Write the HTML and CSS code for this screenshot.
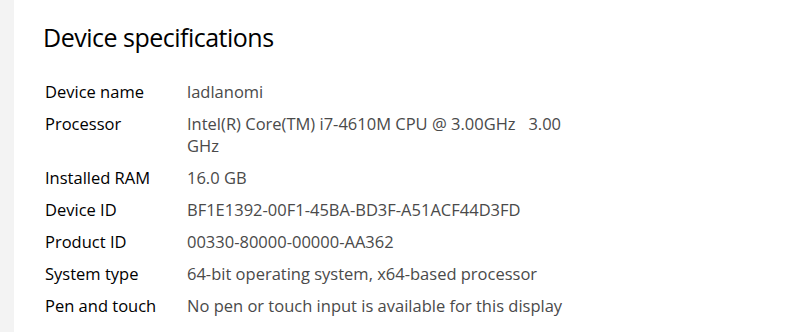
FILE: index.html
```html
<!DOCTYPE html>
<html lang="en">
<head>
<meta charset="utf-8">
<title>About</title>
<link rel="stylesheet" href="styles.css">
</head>
<body>
<div class="window">
  <div class="nav-edge"></div>
  <main class="content">
    <h1 class="title">Device specifications</h1>
    <dl class="specs">
      <dt>Device name</dt><dd>ladlanomi</dd>
      <dt>Processor</dt><dd>Intel(R) Core(TM) i7-4610M CPU @ 3.00GHz&nbsp;&nbsp;&nbsp;3.00 GHz</dd>
      <dt>Installed RAM</dt><dd>16.0 GB</dd>
      <dt>Device ID</dt><dd>BF1E1392-00F1-45BA-BD3F-A51ACF44D3FD</dd>
      <dt>Product ID</dt><dd>00330-80000-00000-AA362</dd>
      <dt>System type</dt><dd>64-bit operating system, x64-based processor</dd>
      <dt>Pen and touch</dt><dd>No pen or touch input is available for this display</dd>
    </dl>
  </main>
</div>
</body>
</html>
```
FILE: styles.css
```css
html, body {
  margin: 0;
  padding: 0;
  background: #ffffff;
}
.window {
  display: flex;
  width: 798px;
  height: 332px;
  overflow: hidden;
  font-family: "Open Sans", "Noto Sans", sans-serif;
}
.nav-edge {
  width: 14px;
  flex: none;
  background: #f3f3f3;
}
.content {
  flex: 1;
  padding-left: 29px;
}
.title {
  margin: 19px 0 0 0;
  font-size: 25px;
  font-weight: 400;
  letter-spacing: -0.5px;
  line-height: 36px;
  color: #000;
}
.specs {
  display: grid;
  grid-template-columns: 142px 395px;
  row-gap: 10px;
  margin: 26px 0 0 2px;
  font-size: 16.5px;
  line-height: 22px;
}
.specs dt {
  color: #000;
}
.specs dd {
  margin: 0;
  color: #4a4a4a;
}
```
